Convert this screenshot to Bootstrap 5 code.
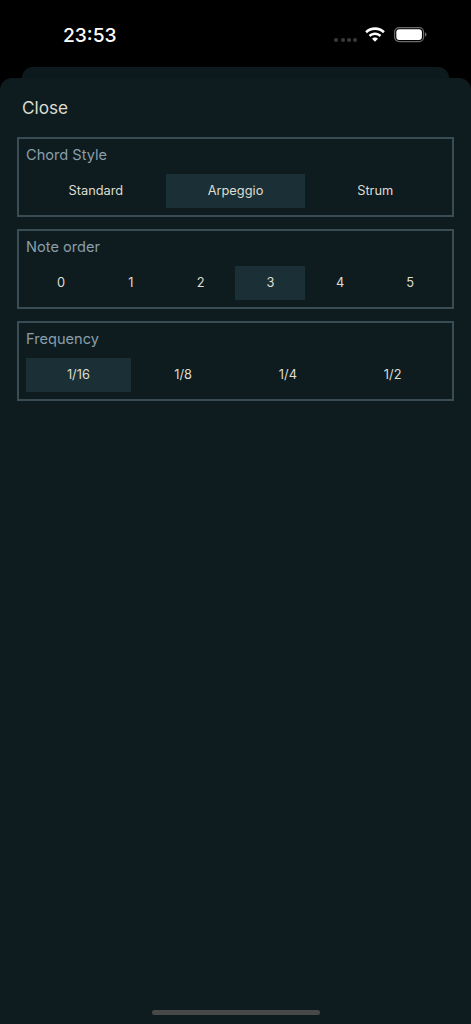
<!DOCTYPE html>
<html lang="en">
<head>
<meta charset="utf-8">
<title>Chord settings</title>
<link href="https://cdn.jsdelivr.net/npm/bootstrap@5.3.0/dist/css/bootstrap.min.css" rel="stylesheet">
<style>
html,body{height:1024px;overflow:hidden;background:#000;font-family:Inter,"Liberation Sans",sans-serif}
.phone{height:1024px}
.statusbar{height:67px;padding:24px 44px 0 63px;color:#fff}
.clock{font-size:19.2px;font-weight:500;line-height:23px;width:60px}
.signal{gap:2.2px;margin-right:8px;margin-top:14px}
.signal i{display:block;width:4px;height:4px;border-radius:50%;background:#3a3a3a}
.wifiglyph{margin-right:9px;margin-top:2.500px}
.batteryglyph{margin-top:3px}
.backsheet{height:11px;margin:0 22px;background:#0d1a1d;border-radius:11px 11px 0 0}
.sheet{background:#0e1c20;border-radius:12px 12px 0 0;padding:0 17px}
.closebtn{font-size:17.2px;line-height:22px;color:#dfddd0;padding:19px 5px 18px;background:none;border:0;text-align:left}
.groupbox{border:2px solid #3b4d54;height:80px;padding:6px 7px 0;margin-bottom:12px}
.groupname{font-size:14.6px;line-height:20px;color:#8a9fab;margin-bottom:9px}
.optionrow{height:34px}
.optionitem{flex:1 1 0;font-size:12.8px;color:#dfddd0;line-height:33px;text-align:center}
.optionitem.chosen{background:#1a3036}
.homebar{width:168px;height:5px;border-radius:3px;background:#484848;margin:0 auto 9px}
</style>
</head>
<body>
<div class="phone d-flex flex-column">
  <div class="statusbar d-flex justify-content-between align-items-start flex-shrink-0">
    <div class="clock">23:53</div>
    <div class="d-flex align-items-start">
      <div class="signal d-flex"><i></i><i></i><i></i><i></i></div>
      <svg width="20" height="15" viewBox="0.500 0 19 14" class="wifiglyph" aria-hidden="true">
        <path d="M10 0.2C6.4 0.2 3.1 1.6 0.7 4L2.4 5.8C4.4 3.8 7 2.7 10 2.7s5.6 1.1 7.600 3.100L19.300 4C16.900 1.600 13.600 .2 10 .2z" fill="#fff"/>
        <path d="M10 5C7.700 5 5.600 5.900 4 7.500L5.700 9.300C6.800 8.200 8.300 7.500 10 7.500s3.200 .7 4.300 1.800L16 7.500C14.400 5.900 12.300 5 10 5z" fill="#fff"/>
        <path d="M10 9.800C8.900 9.800 7.900 10.200 7.200 11L10 13.900 12.800 11C12.100 10.200 11.100 9.800 10 9.800z" fill="#fff"/>
      </svg>
      <svg width="33" height="16" viewBox="0 0 33 16" class="batteryglyph" aria-hidden="true">
        <rect x=".6" y=".6" width="29" height="14" rx="4.500" fill="none" stroke="#6b6b6b" stroke-width="1.200"/>
        <rect x="2.300" y="2.300" width="25.600" height="10.600" rx="3" fill="#fff"/>
        <path d="M31 5.500c1 .3 1.500 1.100 1.500 2s-.5 1.700-1.500 2z" fill="#6b6b6b"/>
      </svg>
    </div>
  </div>
  <div class="backsheet flex-shrink-0"></div>
  <main class="sheet flex-grow-1 d-flex flex-column">
    <button type="button" class="closebtn">Close</button>
    <section class="groupbox">
      <div class="groupname">Chord Style</div>
      <div class="optionrow d-flex">
        <div class="optionitem">Standard</div>
        <div class="optionitem chosen">Arpeggio</div>
        <div class="optionitem">Strum</div>
      </div>
    </section>
    <section class="groupbox">
      <div class="groupname">Note order</div>
      <div class="optionrow d-flex">
        <div class="optionitem">0</div>
        <div class="optionitem">1</div>
        <div class="optionitem">2</div>
        <div class="optionitem chosen">3</div>
        <div class="optionitem">4</div>
        <div class="optionitem">5</div>
      </div>
    </section>
    <section class="groupbox">
      <div class="groupname">Frequency</div>
      <div class="optionrow d-flex">
        <div class="optionitem chosen">1/16</div>
        <div class="optionitem">1/8</div>
        <div class="optionitem">1/4</div>
        <div class="optionitem">1/2</div>
      </div>
    </section>
    <div class="homebar mt-auto"></div>
  </main>
</div>
<script src="https://cdn.jsdelivr.net/npm/bootstrap@5.3.0/dist/js/bootstrap.bundle.min.js"></script>
</body>
</html>
